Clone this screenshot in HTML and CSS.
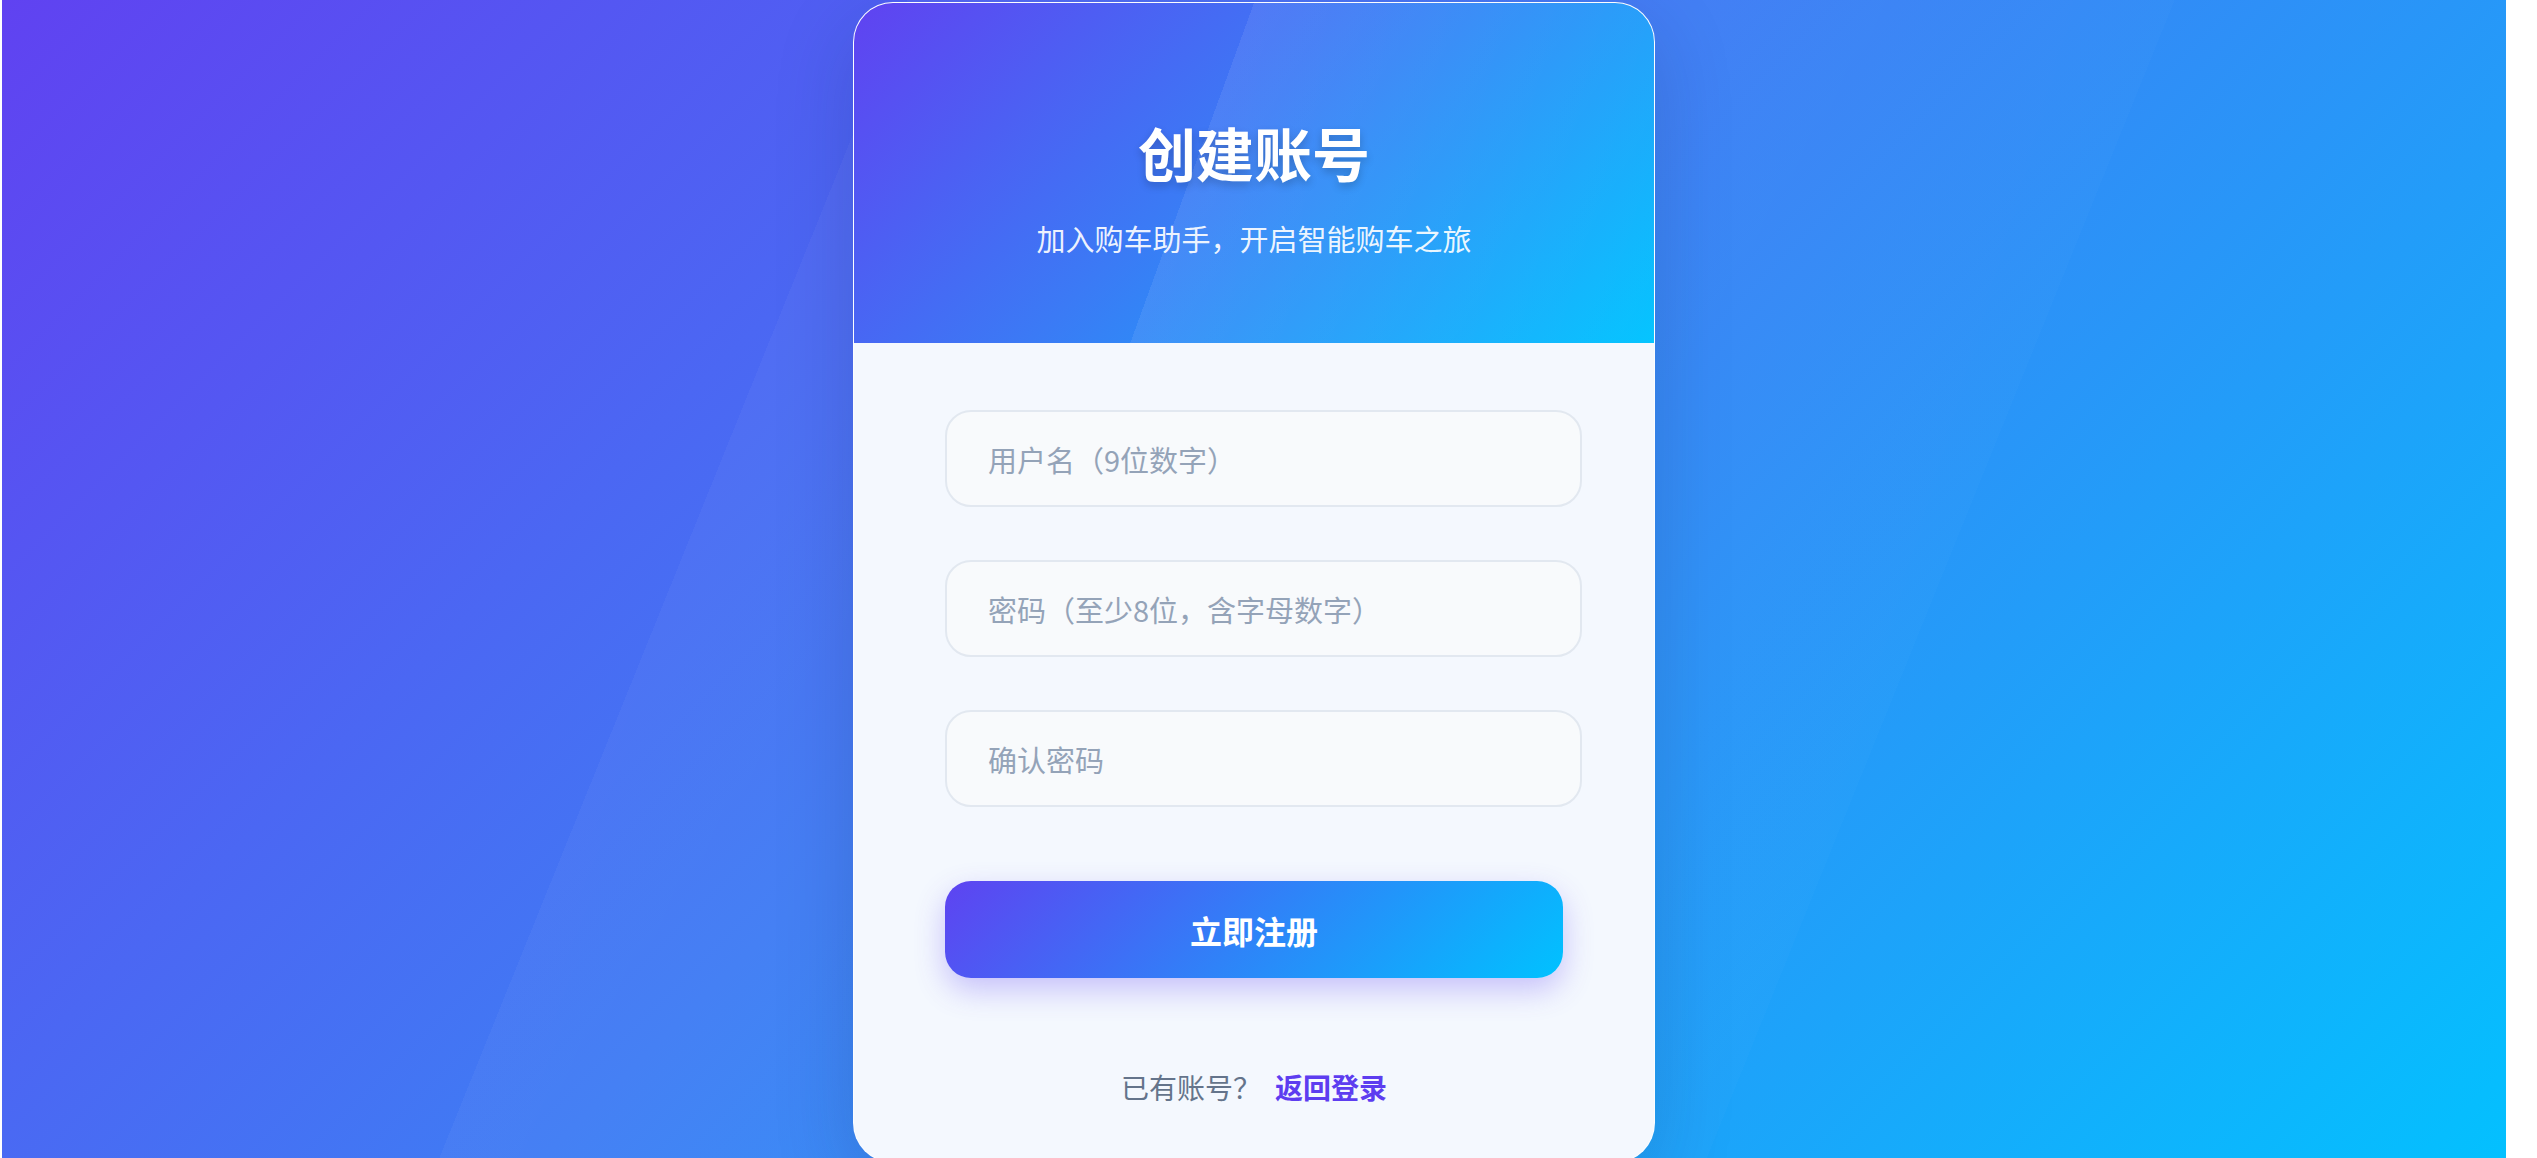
FILE: index.html
```html
<!DOCTYPE html>
<html lang="zh-CN">
<head>
    <meta charset="UTF-8">
    <meta name="viewport" content="width=device-width, initial-scale=1.0">
    <title>创建账号 - 购车助手</title>
    <link rel="stylesheet" href="styles.css">
</head>
<body>
    <div class="page">
        <div class="card">
            <div class="card-header">
                <h1>创建账号</h1>
                <p>加入购车助手，开启智能购车之旅</p>
            </div>
            <form class="card-body" onsubmit="return false;">
                <input type="text" class="field" placeholder="用户名（9位数字）">
                <input type="password" class="field" placeholder="密码（至少8位，含字母数字）">
                <input type="password" class="field" placeholder="确认密码">
                <button type="submit" class="submit">立即注册</button>
                <p class="switch">已有账号？<a href="#">返回登录</a></p>
            </form>
        </div>
    </div>
</body>
</html>
```

FILE: styles.css
```css
* {
    box-sizing: border-box;
}
body {
    margin: 0;
    background: #fff;
    font-family: 'Noto Sans CJK SC', 'Noto Sans', sans-serif;
}
.page {
    position: relative;
    overflow: hidden;
    margin: 0 31px 0 2px;
    padding: 2px 0 108px;
    display: flex;
    justify-content: center;
    align-items: flex-start;
    background: linear-gradient(135deg, #6042f1 0%, #3f7cf4 45%, #00c4ff 100%);
}
.page::before {
    content: '';
    position: absolute;
    inset: 0;
    background: linear-gradient(112deg, transparent 30%, rgba(255, 255, 255, 0.035) 30%, rgba(255, 255, 255, 0.015) 72%, transparent 72%);
}
.card {
    position: relative;
    width: 802px;
    border: 1px solid rgba(255, 255, 255, 0.7);
    border-radius: 40px;
    overflow: hidden;
    background: #f4f8fe;
    box-shadow: 0 25px 80px rgba(20, 30, 90, 0.18);
}
.card-header {
    position: relative;
    height: 340px;
    padding-top: 114px;
    text-align: center;
    color: #fff;
    background: linear-gradient(135deg, #6042f1 0%, #3b7af5 45%, #00c4ff 100%);
}
.card-header::before {
    content: '';
    position: absolute;
    inset: 0;
    background: linear-gradient(110deg, transparent 43.3%, rgba(255, 255, 255, 0.08) 43.3%, rgba(255, 255, 255, 0.02) 100%);
}
.card-header h1 {
    position: relative;
    margin: 0;
    font-size: 58px;
    line-height: 70px;
    font-weight: 700;
    text-shadow: 0 4px 8px rgba(0, 0, 0, 0.2);
}
.card-header p {
    position: relative;
    margin: 31px 0 0;
    font-size: 29px;
    line-height: 40px;
    color: rgba(255, 255, 255, 0.92);
}
.card-body {
    display: flex;
    flex-direction: column;
    padding: 67px 91px 55px;
}
.field {
    width: calc(100% + 19px);
    height: 97px;
    margin-bottom: 53px;
    padding: 0 41px;
    border: 2px solid #e2e8f0;
    border-radius: 26px;
    background: #f8fafc;
    font-family: inherit;
    font-size: 29px;
    color: #334155;
    outline: none;
}
.field:last-of-type {
    margin-bottom: 74px;
}
.field::placeholder {
    color: #94a3b8;
}
.submit {
    width: 100%;
    height: 97px;
    border: none;
    border-radius: 26px;
    background: linear-gradient(135deg, #5e43f1 0%, #00c2ff 100%);
    color: #fff;
    font-family: inherit;
    font-size: 32px;
    font-weight: 700;
    cursor: pointer;
    box-shadow: 0 12px 30px rgba(94, 67, 241, 0.3);
}
.switch {
    margin: 89px 0 0;
    text-align: center;
    font-size: 28px;
    line-height: 40px;
    color: #64748b;
}
.switch a {
    margin-left: 14px;
    color: #5d3df0;
    font-weight: 700;
    text-decoration: none;
}
```
